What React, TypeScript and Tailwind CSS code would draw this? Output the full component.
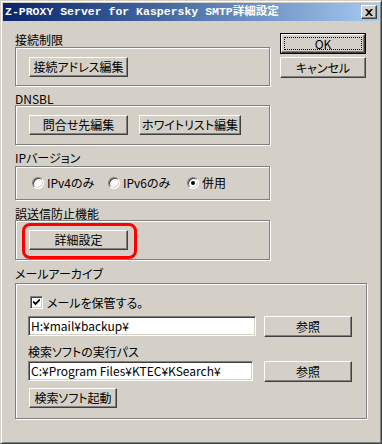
import React from 'react';

const raised =
  'bg-[#d4d0c8] border border-t-white border-l-white border-b-[#404040] border-r-[#404040] shadow-[inset_-1px_-1px_0_#808080]';
const sunken =
  'bg-white border border-t-[#808080] border-l-[#808080] border-b-white border-r-white shadow-[inset_1px_1px_0_#404040,inset_-1px_-1px_0_#d4d0c8]';
const group = 'border border-[#808080] shadow-[inset_1px_1px_0_#fff,1px_1px_0_#fff]';

const Btn: React.FC<{ className?: string; children: React.ReactNode }> = ({ className = '', children }) => (
  <button type="button" className={`${raised} flex items-center justify-center leading-[14px] ${className}`}>
    {children}
  </button>
);

const Label: React.FC<{ className?: string; children: React.ReactNode }> = ({ className = '', children }) => (
  <div className={`h-[13px] leading-[13px] whitespace-nowrap ${className}`}>{children}</div>
);

const Radio: React.FC<{ checked?: boolean; label: string; className?: string }> = ({ checked, label, className = '' }) => (
  <div className={`flex items-center ${className}`}>
    <span className="w-[12px] h-[12px] rounded-full bg-white border border-t-[#808080] border-l-[#808080] border-b-white border-r-white shadow-[inset_1px_1px_0_#404040,inset_-1px_-1px_0_#d4d0c8] flex items-center justify-center">
      {checked && <span className="w-[4px] h-[4px] rounded-full bg-black" />}
    </span>
    <span className="ml-[3px] leading-[14px]">{label}</span>
  </div>
);

export default function App() {
  return (
    <div className="w-[382px] h-[444px] bg-[#d4d0c8] border border-t-[#d4d0c8] border-l-[#d4d0c8] border-b-[#404040] border-r-[#404040] shadow-[inset_1px_1px_0_#fff,inset_-1px_-1px_0_#808080] p-[2px] text-[12px] text-black font-['Noto_Sans_CJK_JP',sans-serif] [font-feature-settings:'palt'] overflow-hidden">
      {/* title bar */}
      <div className="h-[18px] bg-linear-to-r from-[#0a246a] to-[#a6caf0] flex items-center pl-[2px] pr-[2px]">
        <span className="font-['Liberation_Mono','Noto_Sans_CJK_JP',monospace] font-bold text-[11.5px] text-white leading-none whitespace-nowrap">
          Z-PROXY Server for Kaspersky SMTP詳細設定
        </span>
        <div className={`ml-auto w-[16px] h-[14px] ${raised} flex items-center justify-center`}>
          <svg width="8" height="7" viewBox="0 0 8 7">
            <path d="M0 0H2L4 2L6 0H8L5 3.5L8 7H6L4 5L2 7H0L3 3.5Z" fill="#000" />
          </svg>
        </div>
      </div>

      {/* upper part */}
      <div className="flex pl-[12px] pt-[12px]">
        <div className="w-[255px] flex flex-col">
          <Label>接続制限</Label>
          <div className={`${group} mt-[1px] h-[39px] flex items-center pl-[13px]`}>
            <Btn className="w-[99px] h-[20px]">接続アドレス編集</Btn>
          </div>

          <Label className="mt-[6px]">DNSBL</Label>
          <div className={`${group} h-[40px] flex items-center pl-[13px] gap-[11px]`}>
            <Btn className="w-[99px] h-[20px]">問合せ先編集</Btn>
            <Btn className="w-[102px] h-[20px]">ホワイトリスト編集</Btn>
          </div>

          <Label className="mt-[6px]">IPバージョン</Label>
          <div className={`${group} mt-[2px] h-[34px] flex items-center pl-[16px]`}>
            <Radio label="IPv4のみ" className="w-[76px]" />
            <Radio label="IPv6のみ" className="w-[79px]" />
            <Radio label="併用" checked />
          </div>

          <Label className="mt-[7px]">誤送信防止機能</Label>
          <div className={`${group} relative h-[40px] flex items-center pl-[13px]`}>
            <Btn className="w-[99px] h-[20px]">詳細設定</Btn>
            <div className="absolute left-[6px] top-[2px] w-[115px] h-[36px] rounded-[8px] border-[3px] border-[#ff0000]" />
          </div>
        </div>

        <div className="ml-[10px] w-[86px] flex flex-col">
          <button type="button" className="h-[21px] border border-black">
            <div className={`h-full ${raised} p-[2px]`}>
              <div className="h-full border border-dotted border-black flex items-center justify-center leading-[12px]">
                OK
              </div>
            </div>
          </button>
          <Btn className="mt-[3px] h-[21px]">キャンセル</Btn>
        </div>
      </div>

      {/* mail archive */}
      <div className="pl-[12px]">
        <Label className="mt-[7px]">メールアーカイブ</Label>
        <div className={`${group} mt-[3px] w-[352px] h-[136px] flex flex-col pl-[12px] pt-[12px]`}>
          <div className="flex items-center h-[13px] ml-[2px]">
            <span className={`w-[13px] h-[13px] ${sunken} flex items-center justify-center`}>
              <svg width="7" height="7" viewBox="0 0 7 7">
                <path d="M0 2.5L2.5 5L7 0.5" stroke="#000" strokeWidth="1.8" fill="none" />
              </svg>
            </span>
            <span className="ml-[4px] leading-[14px]">メールを保管する。</span>
          </div>

          <div className="flex items-start mt-[7px]">
            <div className={`${sunken} w-[228px] h-[20px] flex items-center pl-[2px] leading-[14px] whitespace-nowrap`}>
              H:¥mail¥backup¥
            </div>
            <Btn className="ml-[8px] w-[88px] h-[21px]">参照</Btn>
          </div>

          <Label className="mt-[8px]">検索ソフトの実行パス</Label>

          <div className="flex items-start mt-[3px]">
            <div className={`${sunken} w-[225px] h-[20px] flex items-center pl-[2px] leading-[14px] whitespace-nowrap`}>
              C:¥Program Files¥KTEC¥KSearch¥
            </div>
            <Btn className="ml-[11px] w-[88px] h-[21px]">参照</Btn>
          </div>

          <Btn className="mt-[6px] ml-[1px] w-[88px] h-[20px]">検索ソフト起動</Btn>
        </div>
      </div>
    </div>
  );
}
